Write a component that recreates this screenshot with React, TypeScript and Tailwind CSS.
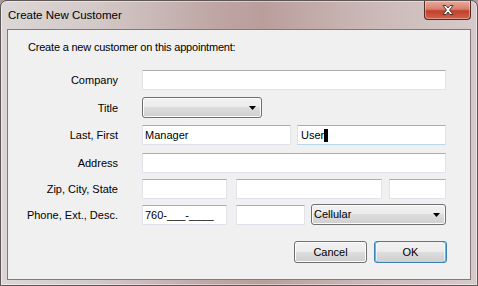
const font = "font-['Liberation_Sans',Arial,sans-serif]";

const TextBox = ({ className = "", children }: { className?: string; children?: React.ReactNode }) => (
  <div
    className={`flex h-[20px] items-center border border-[#e2e3ea] border-t-[#abadb3] bg-white pl-[2px] text-[11px] text-black ${className}`}
  >
    {children}
  </div>
);

const DropDown = ({ className = "", value }: { className?: string; value?: string }) => (
  <div
    className={`flex h-[21px] items-center justify-between rounded-[3px] border border-[#707070] bg-[linear-gradient(to_bottom,#f2f2f2_0%,#ebebeb_50%,#dddddd_50%,#cfcfcf_100%)] pl-[2px] pr-[5px] text-[11px] text-black shadow-[inset_0_0_0_1px_#fbfbfb] ${className}`}
  >
    <span>{value}</span>
    <svg width="7" height="4" viewBox="0 0 7 4">
      <path d="M0 0h7L3.5 4z" fill="#000" />
    </svg>
  </div>
);

const Row = ({ label, className = "", children }: { label: string; className?: string; children: React.ReactNode }) => (
  <div className={`flex items-center ${className}`}>
    <div className="w-[110px] text-right text-[11px] leading-[14px] text-black">{label}</div>
    <div className="ml-[24px] flex items-center">{children}</div>
  </div>
);

export default function App() {
  return (
    <div className={`h-[286px] w-[478px] overflow-hidden bg-[#a89a98] ${font}`}>
      <div className="flex h-full w-full flex-col rounded-t-[7px] border border-[#5f5656] bg-[linear-gradient(to_right,#dcd7d6_0%,#d3c9c8_20%,#bea6a4_45%,#b99e9c_55%,#c9b6b4_75%,#d6cbca_100%)] px-[6px] pb-[5px] shadow-[inset_0_0_0_1px_rgba(255,255,255,0.45)]">
        <div className="flex h-[28px] items-start justify-between">
          <span className="ml-[1px] mt-[7px] text-[11.5px] leading-[14px] text-black">Create New Customer</span>
          <div className="flex h-[19px] w-[47px] items-center justify-center rounded-b-[4px] border border-t-0 border-[#5b2a24] bg-[linear-gradient(to_bottom,#e9a99a_0%,#d7806f_45%,#c2402a_55%,#d2624a_100%)] shadow-[inset_0_0_0_1px_rgba(255,255,255,0.35)]">
            <svg width="14" height="12" viewBox="0 0 14 12">
              <path
                d="M2 1.5h3l2 2.5 2-2.5h3l-3.5 4.5 3.5 4.5h-3l-2-2.5-2 2.5h-3l3.5-4.5z"
                fill="#fff"
                stroke="#3b2a2a"
                strokeWidth="0.9"
                strokeLinejoin="round"
              />
            </svg>
          </div>
        </div>

        <div className="flex flex-1 flex-col border border-[#857777] bg-[#f0f0f0]">
          <p className="ml-[20px] mt-[10px] text-[11px] leading-[14px] tracking-[-0.2px] text-black">
            Create a new customer on this appointment:
          </p>

          <Row label="Company" className="mt-[16px]">
            <TextBox className="w-[304px]" />
          </Row>
          <Row label="Title" className="mt-[7px]">
            <DropDown className="w-[120px]" />
          </Row>
          <Row label="Last, First" className="mt-[7px]">
            <TextBox className="w-[149px]">Manager</TextBox>
            <TextBox className="ml-[6px] w-[149px] border-[#b5cfe7] border-t-[#3d7bad] border-b-[#b7d9ed] pl-[3px]">
              <span>User</span>
              <span className="h-[13px] w-[4px] bg-black" />
            </TextBox>
          </Row>
          <Row label="Address" className="mt-[8px]">
            <TextBox className="w-[304px]" />
          </Row>
          <Row label="Zip, City, State" className="mt-[6px]">
            <TextBox className="w-[85px]" />
            <TextBox className="ml-[9px] w-[146px]" />
            <TextBox className="ml-[7px] w-[57px]" />
          </Row>
          <Row label="Phone, Ext., Desc." className="mt-[5px]">
            <TextBox className="mt-[1px] w-[85px]">760-___-____</TextBox>
            <TextBox className="ml-[9px] mt-[1px] w-[69px]" />
            <DropDown className="ml-[6px] w-[135px]" value="Cellular" />
          </Row>

          <div className="mr-[23px] mt-[16px] flex justify-end gap-[7px]">
            <div className="flex h-[22px] w-[73px] items-center justify-center rounded-[3px] border border-[#707070] bg-[linear-gradient(to_bottom,#f2f2f2_0%,#ebebeb_50%,#dddddd_50%,#cfcfcf_100%)] text-[11px] text-black shadow-[inset_0_0_0_1px_#fbfbfb]">
              Cancel
            </div>
            <div className="flex h-[22px] w-[73px] items-center justify-center rounded-[3px] border border-[#3c7fb1] bg-[linear-gradient(to_bottom,#eaf6fd_0%,#d9f0fc_50%,#bee6fd_50%,#a7d9f5_100%)] text-[11px] text-black shadow-[inset_0_0_0_1px_#48c4f0,inset_0_0_0_2px_rgba(255,255,255,0.6)]">
              <span className="flex h-full w-full items-center justify-center rounded-[2px] bg-[linear-gradient(to_bottom,#f2f2f2_0%,#ebebeb_50%,#dddddd_50%,#cfcfcf_100%)] [margin:2px]">
                OK
              </span>
            </div>
          </div>
        </div>
      </div>
    </div>
  );
}
